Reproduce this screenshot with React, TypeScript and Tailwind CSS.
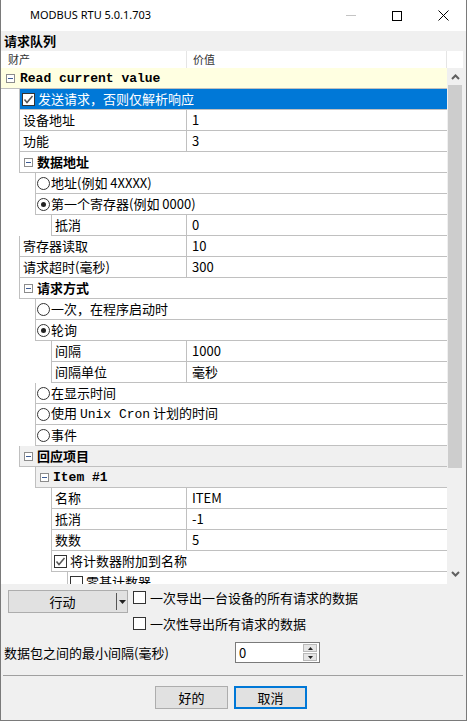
import React from 'react';

type Row = {
  level: number;
  kind: 'cat' | 'prop' | 'check' | 'radio';
  label: string;
  value?: string;
  checked?: boolean;
  selected?: boolean;
  bg?: string;
  mono?: boolean;
};

const rows: Row[] = [
  { level: 0, kind: 'cat', label: 'Read current value', mono: true, bg: 'bg-[#ffffe1]' },
  { level: 1, kind: 'check', label: '发送请求，否则仅解析响应', checked: true, selected: true },
  { level: 1, kind: 'prop', label: '设备地址', value: '1' },
  { level: 1, kind: 'prop', label: '功能', value: '3' },
  { level: 1, kind: 'cat', label: '数据地址' },
  { level: 2, kind: 'radio', label: '地址(例如 4XXXX)' },
  { level: 2, kind: 'radio', label: '第一个寄存器(例如 0000)', checked: true },
  { level: 3, kind: 'prop', label: '抵消', value: '0' },
  { level: 1, kind: 'prop', label: '寄存器读取', value: '10' },
  { level: 1, kind: 'prop', label: '请求超时(毫秒)', value: '300' },
  { level: 1, kind: 'cat', label: '请求方式' },
  { level: 2, kind: 'radio', label: '一次，在程序启动时' },
  { level: 2, kind: 'radio', label: '轮询', checked: true },
  { level: 3, kind: 'prop', label: '间隔', value: '1000' },
  { level: 3, kind: 'prop', label: '间隔单位', value: '毫秒' },
  { level: 2, kind: 'radio', label: '在显示时间' },
  { level: 2, kind: 'radio', label: '使用 Unix Cron 计划的时间' },
  { level: 2, kind: 'radio', label: '事件' },
  { level: 1, kind: 'cat', label: '回应项目', bg: 'bg-[#f0f0f0]' },
  { level: 2, kind: 'cat', label: 'Item #1', mono: true, bg: 'bg-[#f0f0f0]' },
  { level: 3, kind: 'prop', label: '名称', value: 'ITEM' },
  { level: 3, kind: 'prop', label: '抵消', value: '-1' },
  { level: 3, kind: 'prop', label: '数数', value: '5' },
  { level: 3, kind: 'check', label: '将计数器附加到名称', checked: true },
  { level: 4, kind: 'check', label: '零基计数器' },
];

const indent = ['ml-0', 'ml-[18px]', 'ml-[34px]', 'ml-[50px]', 'ml-[66px]'];

const cjk = "font-['Noto_Sans_CJK_SC',sans-serif]";
const mono = "font-['Liberation_Mono','Noto_Sans_CJK_SC',monospace]";

function MinusBox() {
  return (
    <span className="w-[9px] h-[9px] shrink-0 border border-[#8c8c8c] bg-white flex items-center justify-center">
      <span className="w-[5px] h-px bg-[#3d5c94]" />
    </span>
  );
}

function CheckBox({ checked }: { checked?: boolean }) {
  return (
    <span className="w-[13px] h-[13px] shrink-0 border border-[#333] bg-white flex items-center justify-center">
      {checked && (
        <svg width="11" height="11" viewBox="0 0 11 11">
          <polyline points="1.5,5.5 4,8.5 9.5,2" fill="none" stroke="#555" strokeWidth="1.5" />
        </svg>
      )}
    </span>
  );
}

function Radio({ checked }: { checked?: boolean }) {
  return (
    <span className="w-[13px] h-[13px] shrink-0 rounded-full border border-[#333] bg-white flex items-center justify-center">
      {checked && <span className="w-[5px] h-[5px] rounded-full bg-[#222]" />}
    </span>
  );
}

function GridRow({ row }: { row: Row }) {
  const font = row.mono ? mono : cjk;
  const border = row.level > 0 ? 'border-l border-[#c0c0c0]' : '';
  const bg = row.selected ? 'bg-[#0078d7] text-white' : `${row.bg ?? 'bg-white'} text-black`;
  const base = `h-[21px] shrink-0 flex items-center border-b border-b-[#c0c0c0] ${indent[row.level]} ${border} ${bg}`;

  if (row.kind === 'cat') {
    return (
      <div className={`${base} ${row.level === 0 ? 'pl-[5px]' : 'pl-[4px]'}`}>
        <MinusBox />
        <span
          className={`${row.level === 0 ? 'ml-[5px]' : 'ml-[4px]'} ${row.mono ? 'pt-[2px]' : ''} text-[13px] leading-[20px] font-bold ${font}`}
        >
          {row.label}
        </span>
      </div>
    );
  }

  if (row.kind === 'prop') {
    return (
      <div className={`${base} items-stretch`}>
        <div className={`flex-1 flex items-center pl-[3px] text-[13px] ${cjk}`}>{row.label}</div>
        <div className={`w-[261px] shrink-0 flex items-center border-l border-[#c0c0c0] pl-[5px] text-[13px] ${cjk}`}>
          {row.value}
        </div>
      </div>
    );
  }

  return (
    <div className={`${base} ${row.kind === 'radio' ? 'pl-[1px] gap-[1px]' : 'pl-[2px] gap-[3px]'}`}>
      {row.kind === 'radio' ? <Radio checked={row.checked} /> : <CheckBox checked={row.checked} />}
      <span className={`text-[13px] leading-[20px] whitespace-nowrap ${cjk}`}>
        {row.label.includes('Unix Cron') ? (
          <>
            使用 <span className={mono}>Unix Cron</span> 计划的时间
          </>
        ) : (
          row.label
        )}
      </span>
    </div>
  );
}

function Chevron({ up }: { up?: boolean }) {
  return (
    <svg width="9" height="6" viewBox="0 0 9 6">
      <polyline
        points={up ? '1,5 4.5,1.5 8,5' : '1,1 4.5,4.5 8,1'}
        fill="none"
        stroke="#606060"
        strokeWidth="2"
      />
    </svg>
  );
}

export default function App() {
  return (
    <div className="w-[467px] h-[721px] bg-[#f0f0f0] border-x border-b border-[#7a7a7a] flex flex-col overflow-hidden">
      {/* TITLE BAR */}
      <div className="h-[31px] shrink-0 bg-white flex items-center">
        <span className="ml-[29px] text-[11px] text-black font-['Noto_Sans',sans-serif]">MODBUS RTU 5.0.1.703</span>
        <div className="ml-auto flex items-center">
          <div className="w-[46px] h-[31px] flex items-center justify-center">
            <span className="w-[10px] h-px bg-[#c4c4c4]" />
          </div>
          <div className="w-[46px] h-[31px] flex items-center justify-center">
            <span className="w-[10px] h-[10px] border border-black" />
          </div>
          <div className="w-[46px] h-[31px] flex items-center justify-center">
            <svg width="11" height="11" viewBox="0 0 11 11">
              <path d="M0.5 0.5 L10.5 10.5 M10.5 0.5 L0.5 10.5" stroke="#000" strokeWidth="1" />
            </svg>
          </div>
        </div>
      </div>

      {/* QUEUE HEADER */}
      <div className={`h-[20px] shrink-0 flex items-center pl-[3px] text-[13px] font-bold text-black ${cjk}`}>请求队列</div>

      {/* COLUMN HEADER */}
      <div className={`h-[17px] shrink-0 flex w-[462px] bg-white text-[11px] text-[#333] ${cjk}`}>
        <div className="w-[186px] border-r border-[#e5e5e5] pl-[7px] flex items-center">财产</div>
        <div className="w-[260px] border-r border-[#e5e5e5] pl-[6px] flex items-center">价值</div>
        <div className="flex-1" />
      </div>

      {/* PROPERTY GRID */}
      <div className="h-[516px] shrink-0 flex w-[462px]">
        <div className="w-[446px] h-full bg-white flex flex-col overflow-hidden">
          {rows.map((r, i) => (
            <GridRow key={i} row={r} />
          ))}
        </div>
        <div className="w-[16px] h-full bg-[#f0f0f0] flex flex-col">
          <div className="h-[17px] flex items-center justify-center">
            <Chevron up />
          </div>
          <div className="h-[383px] bg-[#cdcdcd] mx-[1px]" />
          <div className="flex-1" />
          <div className="h-[17px] flex items-center justify-center mb-[2px]">
            <Chevron />
          </div>
        </div>
      </div>

      {/* BOTTOM PANEL */}
      <div className={`flex-1 flex flex-col text-[13px] text-black ${cjk}`}>
        <div className="flex items-start pt-[6px] pl-[7px]">
          <div className="w-[120px] h-[23px] bg-[#e1e1e1] border border-[#adadad] flex items-center">
            <span className="flex-1 text-center">行动</span>
            <span className="w-px h-[17px] bg-[#555]" />
            <span className="w-[10px] flex items-center justify-center">
              <svg width="7" height="4" viewBox="0 0 7 4">
                <polygon points="0,0 7,0 3.5,4" fill="#222" />
              </svg>
            </span>
          </div>
          <div className="ml-[5px] mt-[1px] flex flex-col gap-[13px]">
            <div className="flex items-center gap-[4px] h-[13px]">
              <CheckBox />
              <span>一次导出一台设备的所有请求的数据</span>
            </div>
            <div className="flex items-center gap-[4px] h-[13px]">
              <CheckBox />
              <span>一次性导出所有请求的数据</span>
            </div>
          </div>
        </div>

        <div className="flex items-center mt-[12px] pl-[3px]">
          <span className="w-[231px]">数据包之间的最小间隔(毫秒)</span>
          <div className="w-[85px] h-[21px] bg-white border border-[#7a7a7a] flex items-center">
            <span className="flex-1 pl-[3px]">0</span>
            <div className="w-[14px] h-[17px] mr-[2px] flex flex-col gap-px">
              <div className="flex-1 bg-[#e5e5e5] border border-[#b9b9b9] flex items-center justify-center">
                <svg width="5" height="3" viewBox="0 0 5 3">
                  <polygon points="0,3 5,3 2.5,0" fill="#222" />
                </svg>
              </div>
              <div className="flex-1 bg-[#e5e5e5] border border-[#b9b9b9] flex items-center justify-center">
                <svg width="5" height="3" viewBox="0 0 5 3">
                  <polygon points="0,0 5,0 2.5,3" fill="#222" />
                </svg>
              </div>
            </div>
          </div>
        </div>

        <div className="mt-[12px] ml-[2px] w-[460px] h-px bg-[#a0a0a0]" />

        <div className="flex mt-[10px] ml-[154px] gap-[6px]">
          <button className="w-[73px] h-[23px] bg-[#e1e1e1] border border-[#adadad]">好的</button>
          <button className="w-[73px] h-[23px] bg-[#e1e1e1] border-2 border-[#0078d7]">取消</button>
        </div>
      </div>
    </div>
  );
}
